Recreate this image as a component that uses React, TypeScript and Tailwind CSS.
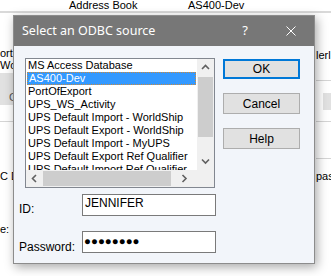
import React from 'react';

const items = [
  'MS Access Database',
  'AS400-Dev',
  'PortOfExport',
  'UPS_WS_Activity',
  'UPS Default Import - WorldShip',
  'UPS Default Export - WorldShip',
  'UPS Default Import - MyUPS',
  'UPS Default Export Ref Qualifier',
  'UPS Default Import Ref Qualifier',
];

const Chevron: React.FC<{ dir: 'up' | 'down' | 'left' | 'right' }> = ({ dir }) => {
  const d = {
    up: 'M1 5 L4.5 1.5 L8 5',
    down: 'M1 1.5 L4.5 5 L8 1.5',
    left: 'M5 1 L1.5 4.5 L5 8',
    right: 'M1.5 1 L5 4.5 L1.5 8',
  }[dir];
  const horiz = dir === 'left' || dir === 'right';
  return (
    <svg width={horiz ? 7 : 9} height={horiz ? 9 : 7} viewBox={horiz ? '0 0 7 9' : '0 0 9 7'}>
      <path d={d} fill="none" stroke="#606060" strokeWidth="1.6" />
    </svg>
  );
};

const SourceList: React.FC = () => (
  <div className="w-[190px] h-[130px] border border-[#828790] bg-white flex flex-col">
    <div className="flex h-[111px]">
      <div className="w-[171px] overflow-hidden flex flex-col">
        {items.map((it, i) => (
          <div
            key={it}
            className={
              i === 1
                ? 'h-[13px] shrink-0 mx-[1px] pl-[1px] bg-[#3399ff] text-white border border-dotted border-[#cc8a3c] leading-[11px] whitespace-nowrap'
                : 'h-[13px] shrink-0 pl-[2px] text-black leading-[13px] whitespace-nowrap'
            }
          >
            {it}
          </div>
        ))}
      </div>
      <div className="w-[17px] bg-[#f0f0f0] flex flex-col">
        <div className="h-[17px] flex items-center justify-center"><Chevron dir="up" /></div>
        <div className="h-[1px]" />
        <div className="h-[60px] w-[15px] ml-[1px] bg-[#cdcdcd]" />
        <div className="flex-1" />
        <div className="h-[17px] flex items-center justify-center"><Chevron dir="down" /></div>
      </div>
    </div>
    <div className="flex h-[17px]">
      <div className="w-[171px] bg-[#f0f0f0] flex items-center">
        <div className="w-[17px] flex justify-center"><Chevron dir="left" /></div>
        <div className="w-[128px] h-[15px] bg-[#cdcdcd]" />
        <div className="flex-1 flex justify-center"><Chevron dir="right" /></div>
      </div>
      <div className="w-[17px] bg-[#f0f0f0]" />
    </div>
  </div>
);

const Btn: React.FC<{ label: string; primary?: boolean }> = ({ label, primary }) => (
  <button
    className={
      primary
        ? 'w-[77px] h-[20px] bg-[#e1e1e1] border-2 border-[#0078d7] text-black text-[12px] leading-none'
        : 'w-[77px] h-[21px] bg-[#e1e1e1] border border-[#adadad] text-black text-[12px] leading-none'
    }
  >
    {label}
  </button>
);

const Dialog: React.FC = () => (
  <div className="absolute left-[13px] top-[15px] w-[302px] h-[249px] border border-[#8c8c8c] bg-[#f2f5fa] shadow-[2px_3px_10px_rgba(0,0,0,0.35)] flex flex-col">
    <div className="h-[30px] bg-[#777777] flex items-center text-white" style={{ fontFamily: '"Noto Sans", sans-serif' }}>
      <span className="pl-[8px] text-[12.5px] flex-1">Select an ODBC source</span>
      <span className="w-[46px] text-center text-[13px] ml-[2px]">?</span>
      <span className="w-[46px] flex justify-center">
        <svg width="10" height="10" viewBox="0 0 10 10">
          <path d="M0.5 0.5 L9.5 9.5 M9.5 0.5 L0.5 9.5" stroke="#ffffff" strokeWidth="1" />
        </svg>
      </span>
    </div>
    <div className="flex-1 pl-[5px] pt-[12px] text-[11px] text-black">
      <div className="flex">
        <div className="ml-[6px]"><SourceList /></div>
        <div className="ml-[8px] pt-[1px] flex flex-col gap-[14px]">
          <Btn label="OK" primary />
          <Btn label="Cancel" />
          <Btn label="Help" />
        </div>
      </div>
      <div className="flex mt-[6px] h-[22px]">
        <span className="w-[63px] pt-[6px] text-[12px]">ID:</span>
        <div className="w-[134px] h-[22px] border border-[#7a7a7a] bg-white pl-[2px] pt-[1px] text-[12px] leading-[15px]">JENNIFER</div>
      </div>
      <div className="flex mt-[15px] h-[22px]">
        <span className="w-[63px] pt-[7px] text-[12px]">Password:</span>
        <div className="w-[134px] h-[22px] border border-[#7a7a7a] bg-white pl-[1px] text-[11.5px] leading-[19px]">●●●●●●●●</div>
      </div>
    </div>
  </div>
);

export default function App() {
  return (
    <div className="relative w-[331px] h-[276px] bg-white overflow-hidden text-black text-[11px]" style={{ fontFamily: '"Liberation Sans", Arial, sans-serif' }}>
      <div className="h-[13px] flex border-b-2 border-[#d9d9d9] leading-[10px]">
        <span className="ml-[69px] w-[119px]">Address Book</span>
        <span>AS400-Dev</span>
      </div>
      <div className="flex justify-between">
        <div className="w-[13px] overflow-hidden flex flex-col">
          <div className="h-[34px]" />
          <div className="h-[12px] leading-[12px] whitespace-nowrap">ort</div>
          <div className="h-[12px] leading-[12px] whitespace-nowrap">Wo</div>
          <div className="h-[2px]" />
          <div className="h-[32px] bg-[#e1e1e1] pl-[9px] pt-[18px] text-[#555] leading-[12px]">C</div>
          <div className="h-[16px]" />
          <div className="h-[1px] bg-[#d5d5d5]" />
          <div className="h-[48px]" />
          <div className="h-[12px] leading-[12px] whitespace-nowrap">C D</div>
          <div className="h-[41px]" />
          <div className="h-[12px] leading-[12px] whitespace-nowrap">e:</div>
        </div>
        <div className="w-[15px] overflow-hidden flex flex-col">
          <div className="h-[37px]" />
          <div className="h-[10px] leading-[10px] whitespace-nowrap">lerlı</div>
          <div className="h-[20px]" />
          <div className="h-[1px] bg-[#d5d5d5]" />
          <div className="h-[12px]" />
          <div className="h-[17px] ml-[7px] bg-[#e1e1e1]" />
          <div className="h-[11px]" />
          <div className="h-[1px] bg-[#d5d5d5]" />
          <div className="h-[36px]" />
          <div className="h-[1px] bg-[#d5d5d5]" />
          <div className="h-[11px]" />
          <div className="h-[12px] leading-[12px] whitespace-nowrap">pas</div>
        </div>
      </div>
      <Dialog />
    </div>
  );
}
